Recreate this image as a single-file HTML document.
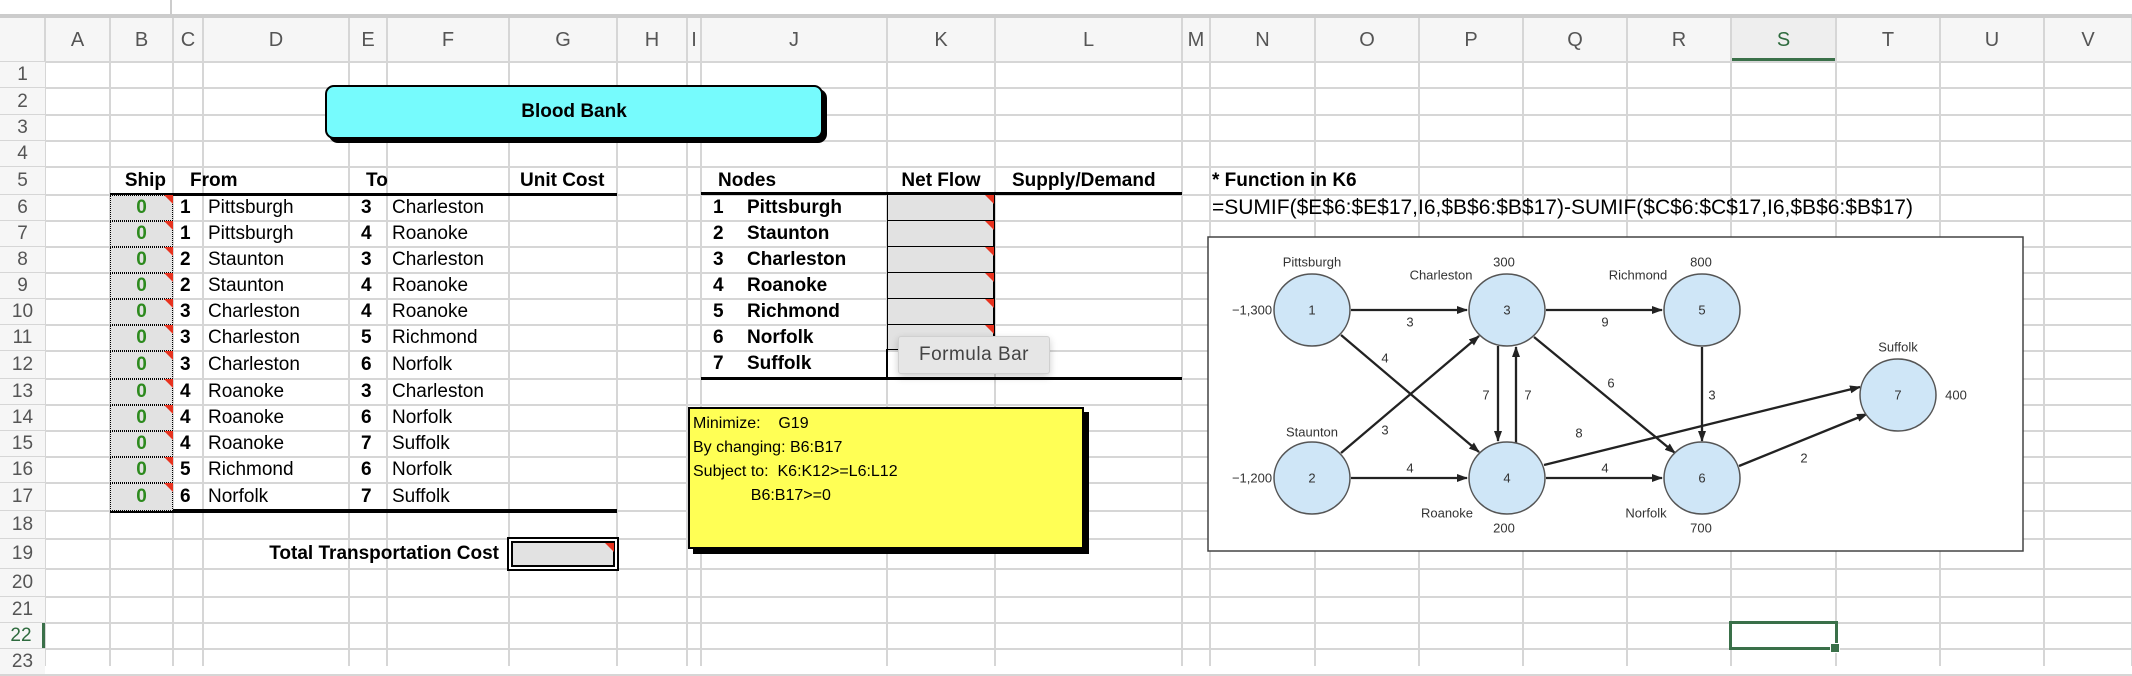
<!DOCTYPE html><html><head><meta charset="utf-8"><style>
*{margin:0;padding:0;box-sizing:border-box}
body{width:2132px;height:666px;overflow:hidden;background:#fff;position:relative;font-family:"Liberation Sans",sans-serif}
.a{position:absolute;white-space:nowrap}
.n{font-family:"Liberation Sans Narrow","Liberation Sans",sans-serif}
.hl{position:absolute;background:#d6d6d6;height:2px}
.vl{position:absolute;background:#d6d6d6;width:2px}
.ch{position:absolute;top:18px;height:44px;line-height:44px;text-align:center;color:#555;font-size:20px;background:#f6f6f6}
.rh{position:absolute;left:0;width:45px;text-align:center;color:#555;font-size:19px;background:#f6f6f6}
.t{position:absolute;font-size:19px;line-height:26px;white-space:nowrap}
.b{font-weight:bold}
.tri{position:absolute;width:0;height:0;border-top:9px solid #e8321e;border-left:9px solid transparent}
</style></head><body>
<div class="a" style="left:0;top:0;width:2132px;height:14px;background:#fff"></div>
<div class="a" style="left:170px;top:0;width:2px;height:14px;background:#ccc"></div>
<div class="a" style="left:0;top:14px;width:2132px;height:4px;background:#ccc"></div>
<div id="g"></div>
<script>
var cols=[0,45,110,173,203,349,387,509,617,687,701,887,995,1182,1210,1315,1419,1523,1627,1731,1836,1940,2044,2132];
var L=["","A","B","C","D","E","F","G","H","I","J","K","L","M","N","O","P","Q","R","S","T","U","V"];
var rows=[62,88,115,141,167,195,221,247,273,299,325,351,379,405,431,457,483,511,539,569,597,623,649,675];
var h="";
for(var i=1;i<cols.length-1;i++){h+='<div class="ch" style="left:'+cols[i]+'px;width:'+(cols[i+1]-cols[i])+'px;'+(L[i]=="S"?'color:#2e6b3e;background:#eee;border-bottom:4px solid #3a7049':'')+'">'+L[i]+'</div>';}
h+='<div class="ch" style="left:0;width:45px"></div>';
for(var i=1;i<cols.length;i++)h+='<div class="vl" style="left:'+(cols[i]-1)+'px;top:18px;height:648px"></div>';
for(var j=0;j<rows.length;j++)h+='<div class="hl" style="left:0;top:'+(rows[j]-1)+'px;width:2132px"></div>';
for(var j=0;j<rows.length-1;j++)h+='<div class="rh" style="top:'+rows[j]+'px;height:'+(rows[j+1]-rows[j]-1)+'px;line-height:'+(rows[j+1]-rows[j])+'px;'+(j==21?'color:#2e6b3e;border-right:3px solid #3a7049':'')+'">'+(j+1)+'</div>';
document.getElementById("g").innerHTML=h;
</script>
<!-- Blood bank -->
<div class="a" style="left:329px;top:89px;width:498px;height:54px;background:#000;border-radius:9px"></div>
<div class="a b" style="left:325px;top:85px;width:498px;height:54px;background:#76fbfd;border:2px solid #000;border-radius:9px;text-align:center;line-height:50px;font-size:19px">Blood Bank</div>
<!-- left table -->
<div class="t b n" style="left:110px;top:167px;width:56px;text-align:right;line-height:28px">Ship</div>
<div class="t b n" style="left:190px;top:167px;line-height:28px">From</div>
<div class="t b n" style="left:366px;top:167px;line-height:28px">To</div>
<div class="t b n" style="left:520px;top:167px;line-height:28px">Unit Cost</div>
<div class="a" style="left:110px;top:193px;width:507px;height:3px;background:#000"></div>
<div class="a" style="left:110px;top:509px;width:507px;height:4px;background:#000"></div>
<div id="lt"></div>
<script>
var d=[[1,"Pittsburgh",3,"Charleston"],[1,"Pittsburgh",4,"Roanoke"],[2,"Staunton",3,"Charleston"],[2,"Staunton",4,"Roanoke"],[3,"Charleston",4,"Roanoke"],[3,"Charleston",5,"Richmond"],[3,"Charleston",6,"Norfolk"],[4,"Roanoke",3,"Charleston"],[4,"Roanoke",6,"Norfolk"],[4,"Roanoke",7,"Suffolk"],[5,"Richmond",6,"Norfolk"],[6,"Norfolk",7,"Suffolk"]];
var h="";
for(var k=0;k<12;k++){var y=rows[k+5],hh=rows[k+6]-y;
h+='<div class="a" style="left:110px;top:'+y+'px;width:63px;height:'+hh+'px;background:#e2e2e2;border:1px dotted #000"></div>';
h+='<div class="tri" style="left:164px;top:'+y+'px"></div>';
h+='<div class="t b n" style="left:110px;top:'+y+'px;width:63px;text-align:center;color:#2d8a1e;line-height:'+hh+'px">0</div>';
h+='<div class="t b n" style="left:180px;top:'+y+'px;line-height:'+hh+'px">'+d[k][0]+'</div>';
h+='<div class="t n" style="left:208px;top:'+y+'px;line-height:'+hh+'px">'+d[k][1]+'</div>';
h+='<div class="t b n" style="left:361px;top:'+y+'px;line-height:'+hh+'px">'+d[k][2]+'</div>';
h+='<div class="t n" style="left:392px;top:'+y+'px;line-height:'+hh+'px">'+d[k][3]+'</div>';}
var nm=["Pittsburgh","Staunton","Charleston","Roanoke","Richmond","Norfolk","Suffolk"];
for(var k=0;k<7;k++){var y=rows[k+5];
h+='<div class="t b" style="left:713px;top:'+y+'px;font-size:19px">'+(k+1)+'</div>';
h+='<div class="t b" style="left:747px;top:'+y+'px;font-size:19px">'+nm[k]+'</div>';
if(k<6){h+='<div class="a" style="left:887px;top:'+(y-1)+'px;width:108px;height:'+(k==5?26:27)+'px;background:#e2e2e2;border:1px solid #000;border-width:1px 2px 1px 1px"></div><div class="tri" style="left:985px;top:'+y+'px"></div>';}}
document.getElementById("lt").innerHTML=h;
</script>
<div class="a" style="left:886px;top:349px;width:2px;height:30px;background:#000"></div>
<div class="t b" style="left:718px;top:167px;font-size:19px;line-height:28px">Nodes</div>
<div class="t b" style="left:887px;top:167px;width:108px;text-align:center;font-size:19px;line-height:28px">Net Flow</div>
<div class="t b" style="left:1012px;top:167px;font-size:19px;line-height:28px">Supply/Demand</div>
<div class="a" style="left:701px;top:192px;width:481px;height:3px;background:#000"></div>
<div class="a" style="left:701px;top:377px;width:481px;height:3px;background:#000"></div>
<div class="a" style="left:898px;top:336px;width:152px;height:38px;background:#e6e6e6;border:1px solid #d0d0d0;border-radius:3px;box-shadow:0 3px 8px rgba(0,0,0,.2);font-size:19px;color:#444;line-height:36px;text-align:center;letter-spacing:.5px">Formula Bar</div>
<!-- total -->
<div class="t b n" style="left:200px;top:539px;width:299px;text-align:right;line-height:30px">Total Transportation Cost</div>
<div class="a" style="left:507px;top:537px;width:112px;height:34px;border:2px solid #000;background:#fff"></div>
<div class="a" style="left:511px;top:541px;width:104px;height:26px;border:2px solid #000;background:#e2e2e2"></div>
<div class="tri" style="left:605px;top:543px"></div>
<!-- yellow -->
<div class="a" style="left:693px;top:412px;width:396px;height:142px;background:#000"></div>
<div class="a" style="left:688px;top:407px;width:396px;height:142px;background:#ffff55;border:2px solid #000;font-size:16px;line-height:24px;padding:3px 0 0 3px">Minimize:&nbsp;&nbsp;&nbsp; G19<br>By changing: B6:B17<br>Subject to:&nbsp; K6:K12&gt;=L6:L12<br>&nbsp;&nbsp;&nbsp;&nbsp;&nbsp;&nbsp;&nbsp;&nbsp;&nbsp;&nbsp;&nbsp;&nbsp;&nbsp;B6:B17&gt;=0</div>
<!-- right -->
<div class="t b n" style="left:1212px;top:167px;line-height:28px">* Function in K6</div>
<div class="t n" style="left:1212px;top:195px;font-size:21px">=SUMIF($E$6:$E$17,I6,$B$6:$B$17)-SUMIF($C$6:$C$17,I6,$B$6:$B$17)</div>
<svg class="a" style="left:1207px;top:236px" width="818" height="317" viewBox="1207 236 818 317">
<defs><marker id="ar" markerWidth="11" markerHeight="8" refX="10" refY="4" orient="auto" markerUnits="userSpaceOnUse"><path d="M0,0 L11,4 L0,8 z" fill="#222"/></marker></defs>
<rect x="1208" y="237" width="815" height="314" fill="#fff" stroke="#444" stroke-width="1.5"/>
<g stroke="#222" stroke-width="2.3" marker-end="url(#ar)">
<line x1="1351" y1="310" x2="1467" y2="310"/>
<line x1="1546" y1="310" x2="1662" y2="310"/>
<line x1="1351" y1="478" x2="1467" y2="478"/>
<line x1="1546" y1="478" x2="1662" y2="478"/>
<line x1="1341" y1="335" x2="1479" y2="452"/>
<line x1="1341" y1="453" x2="1479" y2="336"/>
<line x1="1498" y1="346" x2="1498" y2="441"/>
<line x1="1516" y1="443" x2="1516" y2="347"/>
<line x1="1534" y1="337" x2="1675" y2="453"/>
<line x1="1702" y1="347" x2="1702" y2="441"/>
<line x1="1544" y1="465" x2="1860" y2="387"/>
<line x1="1739" y1="466" x2="1867" y2="414"/>
</g>
<g fill="#cfe6f7" stroke="#555" stroke-width="1.5">
<ellipse cx="1312" cy="310" rx="38" ry="36"/><ellipse cx="1507" cy="310" rx="38" ry="36"/><ellipse cx="1702" cy="310" rx="38" ry="36"/>
<ellipse cx="1312" cy="478" rx="38" ry="36"/><ellipse cx="1507" cy="478" rx="38" ry="36"/><ellipse cx="1702" cy="478" rx="38" ry="36"/><ellipse cx="1898" cy="395" rx="38" ry="36"/>
</g>
<g font-family="Liberation Sans Narrow,Liberation Sans,sans-serif" font-size="13" fill="#333" text-anchor="middle" dominant-baseline="central">
<text x="1312" y="310">1</text><text x="1507" y="310">3</text><text x="1702" y="310">5</text><text x="1312" y="478">2</text><text x="1507" y="478">4</text><text x="1702" y="478">6</text><text x="1898" y="395">7</text>
<text x="1312" y="262">Pittsburgh</text><text x="1441" y="275">Charleston</text><text x="1504" y="262">300</text><text x="1638" y="275">Richmond</text><text x="1701" y="262">800</text>
<text x="1252" y="310">−1,300</text><text x="1252" y="478">−1,200</text><text x="1898" y="347">Suffolk</text><text x="1956" y="395">400</text>
<text x="1312" y="432">Staunton</text><text x="1447" y="513">Roanoke</text><text x="1504" y="528">200</text><text x="1646" y="513">Norfolk</text><text x="1701" y="528">700</text>
<text x="1410" y="322">3</text><text x="1605" y="322">9</text><text x="1385" y="358">4</text><text x="1486" y="395">7</text><text x="1528" y="395">7</text><text x="1611" y="383">6</text><text x="1712" y="395">3</text><text x="1385" y="430">3</text><text x="1579" y="433">8</text><text x="1410" y="468">4</text><text x="1605" y="468">4</text><text x="1804" y="458">2</text>
</g></svg>
<!-- selection -->
<div class="a" style="left:1729px;top:621px;width:109px;height:29px;border:3px solid #3a7049"></div>
<div class="a" style="left:1830px;top:643px;width:10px;height:10px;background:#3a7049;border:1px solid #fff"></div>
</body></html>
